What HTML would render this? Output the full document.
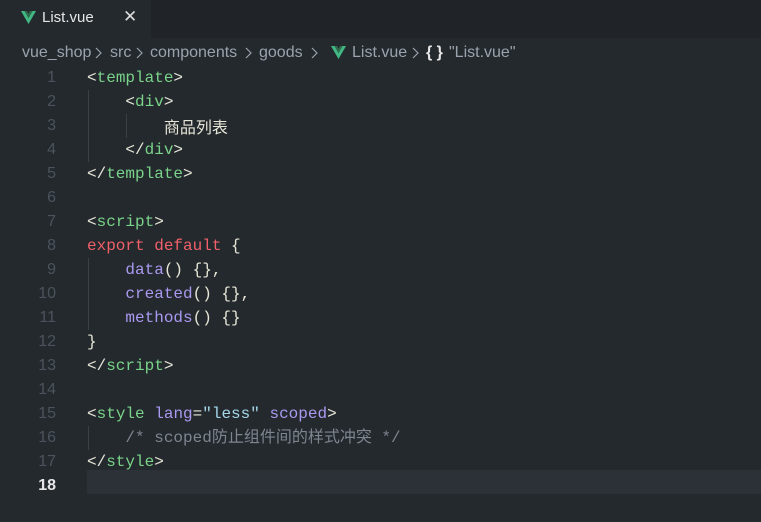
<!DOCTYPE html>
<html><head><meta charset="utf-8"><style>
*{margin:0;padding:0;box-sizing:border-box}
body{width:761px;height:519px;background:#24292d;overflow:hidden;font-family:"Liberation Sans","Noto Sans CJK SC",sans-serif;position:relative}
.tabbar{position:absolute;left:0;top:0;width:761px;height:38px;background:#202428}
.tab{position:absolute;left:0;top:0;width:151px;height:38px;background:#24292d}
.tab .name{position:absolute;left:42px;top:9px;font-size:15px;color:#e6e6e6}
.tab .x{position:absolute;left:123px;top:7px;font-size:17px;color:#ddd}
.cb{position:absolute;top:44px;font-size:16px;color:#9aa3ad;white-space:nowrap}
.chev{position:absolute;top:47px}
.code{position:absolute;left:0;top:66px;font-family:"Liberation Mono","Noto Sans CJK SC",monospace;font-size:16px;line-height:24px;white-space:pre}
.ln{position:absolute;left:0;width:56px;text-align:right;color:#4b535c;font-family:"Liberation Sans",sans-serif;font-size:16px}
.l{position:absolute;left:87px;color:#e6e6d8}
.g{color:#79d38a}.b{color:#e6e6d8}.r{color:#f0606a}.p{color:#a999f0}.c{color:#7d858f}.s{color:#a5d7ea}
.cur{position:absolute;left:87px;top:470px;width:674px;height:24px;background:#2c3138}
.guide{position:absolute;width:1px;background:#3a4048}
</style></head><body>
<div class="tabbar"><div class="tab">
<svg style="position:absolute;left:21px;top:11px" width="15" height="13" viewBox="0 0 15 13"><path d="M0 0h3.5L7.5 7 11.5 0H15L7.5 13z" fill="#41b883"/><path d="M3.5 0h2.5l1.5 2.6L9 0h2.5L7.5 7z" fill="#2f6a4c"/></svg>
<div class="name">List.vue</div><div class="x">✕</div></div></div>

<div class="cb" style="left:22px">vue_shop</div>
<svg class="chev" style="left:95px" width="7" height="12"><path d="M1 1l5 5-5 5" stroke="#9aa3ad" fill="none" stroke-width="1.2"/></svg>
<div class="cb" style="left:110px">src</div>
<svg class="chev" style="left:136px" width="7" height="12"><path d="M1 1l5 5-5 5" stroke="#9aa3ad" fill="none" stroke-width="1.2"/></svg>
<div class="cb" style="left:150px">components</div>
<svg class="chev" style="left:245px" width="7" height="12"><path d="M1 1l5 5-5 5" stroke="#9aa3ad" fill="none" stroke-width="1.2"/></svg>
<div class="cb" style="left:259px">goods</div>
<svg class="chev" style="left:311px" width="7" height="12"><path d="M1 1l5 5-5 5" stroke="#9aa3ad" fill="none" stroke-width="1.2"/></svg>
<svg style="position:absolute;left:331px;top:46px" width="15" height="13" viewBox="0 0 15 13"><path d="M0 0h3.5L7.5 7 11.5 0H15L7.5 13z" fill="#41b883"/><path d="M3.5 0h2.5l1.5 2.6L9 0h2.5L7.5 7z" fill="#2f6a4c"/></svg>
<div class="cb" style="left:352px">List.vue</div>
<svg class="chev" style="left:412px" width="7" height="12"><path d="M1 1l5 5-5 5" stroke="#9aa3ad" fill="none" stroke-width="1.2"/></svg>
<div class="cb" style="left:426px;color:#e6e6e6;font-weight:bold">{ }</div>
<div class="cb" style="left:449px">"List.vue"</div>

<div class="cur"></div>
<div class="guide" style="left:88px;top:90px;height:72px"></div>
<div class="guide" style="left:126px;top:114px;height:24px"></div>
<div class="guide" style="left:88px;top:258px;height:72px"></div>
<div class="guide" style="left:88px;top:426px;height:24px"></div>
<div class="code">
<div class="ln" style="top:0">1</div><div class="l" style="top:0"><span class="b">&lt;</span><span class="g">template</span><span class="b">&gt;</span></div>
<div class="ln" style="top:24px">2</div><div class="l" style="top:24px">    <span class="b">&lt;</span><span class="g">div</span><span class="b">&gt;</span></div>
<div class="ln" style="top:48px">3</div><div class="l" style="top:48px">        <span style="font-family:'Noto Sans CJK SC',sans-serif">商品列表</span></div>
<div class="ln" style="top:72px">4</div><div class="l" style="top:72px">    <span class="b">&lt;/</span><span class="g">div</span><span class="b">&gt;</span></div>
<div class="ln" style="top:96px">5</div><div class="l" style="top:96px"><span class="b">&lt;/</span><span class="g">template</span><span class="b">&gt;</span></div>
<div class="ln" style="top:120px">6</div>
<div class="ln" style="top:144px">7</div><div class="l" style="top:144px"><span class="b">&lt;</span><span class="g">script</span><span class="b">&gt;</span></div>
<div class="ln" style="top:168px">8</div><div class="l" style="top:168px"><span class="r">export default</span> {</div>
<div class="ln" style="top:192px">9</div><div class="l" style="top:192px">    <span class="p">data</span>() {},</div>
<div class="ln" style="top:216px">10</div><div class="l" style="top:216px">    <span class="p">created</span>() {},</div>
<div class="ln" style="top:240px">11</div><div class="l" style="top:240px">    <span class="p">methods</span>() {}</div>
<div class="ln" style="top:264px">12</div><div class="l" style="top:264px">}</div>
<div class="ln" style="top:288px">13</div><div class="l" style="top:288px"><span class="b">&lt;/</span><span class="g">script</span><span class="b">&gt;</span></div>
<div class="ln" style="top:312px">14</div>
<div class="ln" style="top:336px">15</div><div class="l" style="top:336px"><span class="b">&lt;</span><span class="g">style</span> <span class="p">lang</span>=<span class="s">"less"</span> <span class="p">scoped</span><span class="b">&gt;</span></div>
<div class="ln" style="top:360px">16</div><div class="l" style="top:360px">    <span class="c">/* scoped防止组件间的样式冲突 */</span></div>
<div class="ln" style="top:384px">17</div><div class="l" style="top:384px"><span class="b">&lt;/</span><span class="g">style</span><span class="b">&gt;</span></div>
<div class="ln" style="top:408px;color:#e6e6e6;font-weight:bold">18</div>
</div>
</body></html>
